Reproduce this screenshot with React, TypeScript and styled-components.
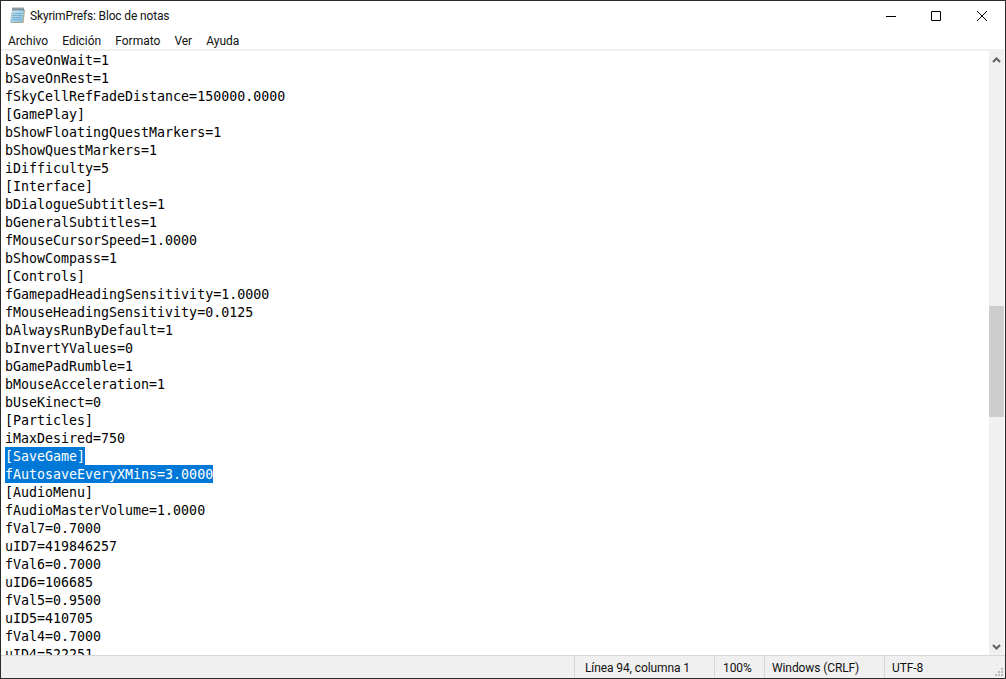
import React from "react";
import styled, { createGlobalStyle } from "styled-components";

const Global = createGlobalStyle`
  html, body { margin: 0; padding: 0; background: #fff; }
  #root { width: 1006px; height: 679px; overflow: hidden; }
`;

const Frame = styled.div`
  box-sizing: border-box;
  width: 1006px;
  height: 679px;
  display: flex;
  flex-direction: column;
  background: #fff;
  border: 1px solid #2b2b2b;
  font-family: Roboto, "Noto Sans", sans-serif;
  color: #000;
`;

const TitleBar = styled.div`
  height: 29px;
  display: flex;
  align-items: center;
  flex: none;
`;

const AppIcon = styled.svg`
  width: 17px;
  height: 17px;
  margin-left: 8px;
  flex: none;
`;

const TitleText = styled.div`
  margin-left: 4px;
  padding-top: 1px;
  font-size: 12px;
  letter-spacing: -0.15px;
  flex: 1;
  color: #111;
`;

const WindowButton = styled.div<{ $w: number }>`
  width: ${(p) => p.$w}px;
  height: 29px;
  display: flex;
  align-items: center;
  justify-content: center;
`;

const MenuBar = styled.div`
  box-sizing: border-box;
  height: 19px;
  display: flex;
  align-items: center;
  flex: none;
  padding: 3px 0 0 0;
`;

const MenuItem = styled.div`
  font-size: 12px;
  padding: 0 7px;
  color: #111;
`;

const Divider = styled.div`
  height: 2px;
  background: #f0f0f0;
  flex: none;
`;

const Body = styled.div`
  flex: 1;
  min-height: 0;
  display: flex;
`;

const Editor = styled.div`
  flex: 1;
  min-width: 0;
  overflow: hidden;
  padding-left: 4px;
  font-family: "DejaVu Sans Mono", "Liberation Mono", monospace;
  font-size: 13.3px;
  line-height: 20px;
`;

const Line = styled.div`
  height: 18px;
  white-space: pre;
`;

const Selected = styled.span`
  background: #0078d7;
  color: #fff;
  display: inline-block;
  height: 18px;
  vertical-align: top;
`;

const ScrollBar = styled.div`
  width: 15px;
  margin-right: 1px;
  flex: none;
  display: flex;
  flex-direction: column;
  background: #f0f0f0;
`;

const ScrollArrow = styled.div`
  height: 17px;
  flex: none;
  display: flex;
  align-items: center;
  justify-content: center;
`;

const Track = styled.div`
  flex: 1;
  display: flex;
  flex-direction: column;
`;

const Thumb = styled.div`
  margin-top: 238px;
  height: 111px;
  background: #cdcdcd;
`;

const StatusBar = styled.div`
  height: 22px;
  flex: none;
  display: flex;
  align-items: stretch;
  background: #f0f0f0;
  border-top: 1px solid #d7d7d7;
  font-size: 12px;
  letter-spacing: -0.1px;
  color: #111;
  position: relative;
`;

const StatusSpacer = styled.div`
  flex: 1;
`;

const StatusCell = styled.div<{ $w: number; $p: number }>`
  box-sizing: border-box;
  width: ${(p) => p.$w}px;
  padding-left: ${(p) => p.$p}px;
  padding-top: 1px;
  border-left: 1px solid #d7d7d7;
  display: flex;
  align-items: center;
`;

const Grip = styled.svg`
  position: absolute;
  right: 0;
  bottom: 0;
  width: 12px;
  height: 12px;
`;

const lines = [
  "bSaveOnWait=1","bSaveOnRest=1","fSkyCellRefFadeDistance=150000.0000","[GamePlay]","bShowFloatingQuestMarkers=1","bShowQuestMarkers=1","iDifficulty=5","[Interface]","bDialogueSubtitles=1","bGeneralSubtitles=1","fMouseCursorSpeed=1.0000","bShowCompass=1","[Controls]","fGamepadHeadingSensitivity=1.0000","fMouseHeadingSensitivity=0.0125","bAlwaysRunByDefault=1","bInvertYValues=0","bGamePadRumble=1","bMouseAcceleration=1","bUseKinect=0","[Particles]","iMaxDesired=750","[SaveGame]","fAutosaveEveryXMins=3.0000","[AudioMenu]","fAudioMasterVolume=1.0000","fVal7=0.7000","uID7=419846257","fVal6=0.7000","uID6=106685","fVal5=0.9500","uID5=410705","fVal4=0.7000","uID4=522251",
];
const selected = new Set(["[SaveGame]", "fAutosaveEveryXMins=3.0000"]);

export default function App() {
  return (
    <>
      <Global />
      <Frame>
        <TitleBar>
          <AppIcon viewBox="0 0 17 17">
            <defs>
              <linearGradient id="pg" x1="0" y1="0" x2="1" y2="1">
                <stop offset="0" stopColor="#cfe9f7" />
                <stop offset="1" stopColor="#7fbfdf" />
              </linearGradient>
            </defs>
            <path d="M4 3h12l-1.5 13H2z" fill="#b9a77a" />
            <path d="M3.5 2h11.5l-1.5 13H1.5z" fill="url(#pg)" stroke="#8fb5c9" strokeWidth="0.6" />
            <path d="M3.5 6.5h9.5M3.3 8.5h9.5M3 10.5h9.5M2.8 12.5h9.5" stroke="#6fa6c4" strokeWidth="0.8" />
            <path d="M4 .5v3M6 .5v3M8 .5v3M10 .5v3M12 .5v3M14 .5v3" stroke="#44525c" strokeWidth="1" />
          </AppIcon>
          <TitleText>SkyrimPrefs: Bloc de notas</TitleText>
          <WindowButton $w={44}>
            <svg width="10" height="10" viewBox="0 0 10 10"><path d="M0 5.5h10" stroke="#000" /></svg>
          </WindowButton>
          <WindowButton $w={46}>
            <svg width="10" height="10" viewBox="0 0 10 10"><path d="M.5.5h9v9h-9z" fill="none" stroke="#000" /></svg>
          </WindowButton>
          <WindowButton $w={46}>
            <svg width="10" height="10" viewBox="0 0 10 10"><path d="M0 0l10 10M10 0L0 10" stroke="#000" strokeWidth="1" /></svg>
          </WindowButton>
        </TitleBar>
        <MenuBar>
          {["Archivo", "Edición", "Formato", "Ver", "Ayuda"].map((m) => (
            <MenuItem key={m}>{m}</MenuItem>
          ))}
        </MenuBar>
        <Divider />
        <Body>
          <Editor>
            {lines.map((l) => (
              <Line key={l}>{selected.has(l) ? <Selected>{l}</Selected> : l}</Line>
            ))}
          </Editor>
          <ScrollBar>
            <ScrollArrow>
              <svg width="9" height="6" viewBox="0 0 9 6"><path d="M1 5l3.5-3.5L8 5" fill="none" stroke="#606060" strokeWidth="2" /></svg>
            </ScrollArrow>
            <Track><Thumb /></Track>
            <ScrollArrow>
              <svg width="9" height="6" viewBox="0 0 9 6"><path d="M1 1l3.5 3.5L8 1" fill="none" stroke="#606060" strokeWidth="2" /></svg>
            </ScrollArrow>
          </ScrollBar>
        </Body>
        <StatusBar>
          <StatusSpacer />
          <StatusCell $w={140} $p={10}>Línea 94, columna 1</StatusCell>
          <StatusCell $w={50} $p={8}>100%</StatusCell>
          <StatusCell $w={120} $p={7}>Windows (CRLF)</StatusCell>
          <StatusCell $w={121} $p={7}>UTF-8</StatusCell>
          <Grip viewBox="0 0 12 12">
            <path d="M8 2h2v2H8zM5 5h2v2H5zM8 5h2v2H8zM2 8h2v2H2zM5 8h2v2H5zM8 8h2v2H8z" fill="#b8b8b8" />
          </Grip>
        </StatusBar>
      </Frame>
    </>
  );
}
